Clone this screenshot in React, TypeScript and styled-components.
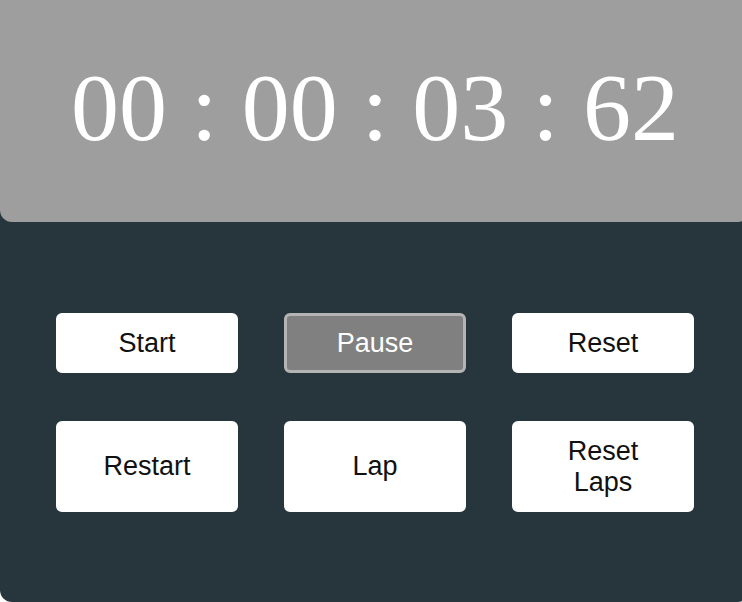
import React from "react";
import styled, { createGlobalStyle } from "styled-components";

const GlobalStyle = createGlobalStyle`
  html, body {
    margin: 0;
    padding: 0;
    overflow: hidden;
    background: #ffffff;
  }
  * { box-sizing: border-box; }
`;

const Watch = styled.div`
  width: 750px;
  height: 602px;
  background: #27363d;
  border-radius: 0 0 12px 12px;
  display: flex;
  flex-direction: column;
`;

const Display = styled.div`
  height: 222px;
  flex: none;
  background: #9e9e9e;
  border-radius: 0 0 12px 12px;
  display: flex;
  align-items: center;
  justify-content: center;
  padding-bottom: 6px;
`;

const Time = styled.div`
  font-family: "Liberation Serif", "Times New Roman", serif;
  font-size: 96px;
  color: #ffffff;
  line-height: 1;
  white-space: pre;
`;

const Controls = styled.div`
  flex: 1;
  display: flex;
  align-items: center;
  justify-content: center;
`;

const Grid = styled.div`
  display: grid;
  grid-template-columns: repeat(3, 182px);
  column-gap: 46px;
  row-gap: 48px;
`;

const Button = styled.button<{ $active?: boolean }>`
  font-family: "Liberation Sans", Arial, sans-serif;
  font-size: 27px;
  line-height: 31px;
  padding: 12px 27px 11px;
  border-radius: 6px;
  border: 3px solid ${(p) => (p.$active ? "#b4b4b4" : "#ffffff")};
  background: ${(p) => (p.$active ? "#808080" : "#ffffff")};
  color: ${(p) => (p.$active ? "#ffffff" : "#111111")};
  cursor: pointer;
  text-align: center;
`;

export default function App() {
  const labels = ["Start", "Pause", "Reset", "Restart", "Lap", "Reset Laps"];
  return (
    <>
      <GlobalStyle />
      <Watch>
        <Display>
          <Time>00 : 00 : 03 : 62</Time>
        </Display>
        <Controls>
          <Grid>
            {labels.map((l) => (
              <Button key={l} $active={l === "Pause"}>
                {l}
              </Button>
            ))}
          </Grid>
        </Controls>
      </Watch>
    </>
  );
}
